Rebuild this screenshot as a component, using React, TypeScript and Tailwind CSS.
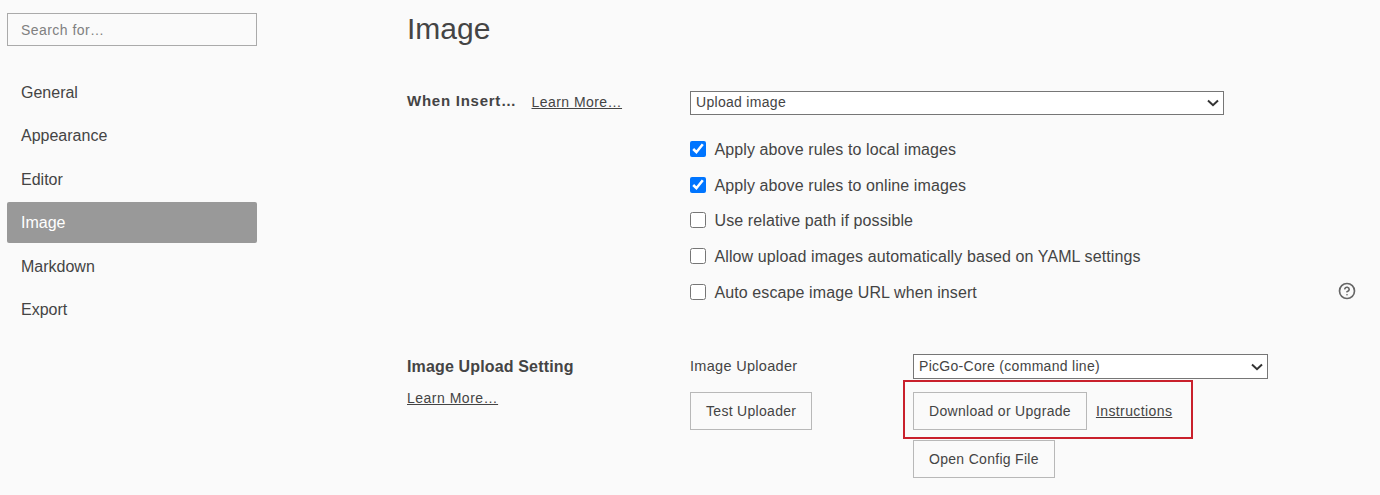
import { CircleHelp } from 'lucide-react'

const navItems = ['General', 'Appearance', 'Editor', 'Image', 'Markdown', 'Export']

const checks = [
  { label: 'Apply above rules to local images', checked: true },
  { label: 'Apply above rules to online images', checked: true },
  { label: 'Use relative path if possible', checked: false },
  { label: 'Allow upload images automatically based on YAML settings', checked: false },
  { label: 'Auto escape image URL when insert', checked: false },
]

const Button = ({ children }: { children: string }) => (
  <button className="h-[38px] px-[15px] border border-[#b8b8b8] text-[14px] tracking-[0.3px] text-[#444]">
    {children}
  </button>
)

const Select = ({ label, className }: { label: string; className: string }) => (
  <div className={`relative ${className}`}>
    <select className="block w-full h-full pl-[5px] pb-[1px] appearance-none border border-[#767676] bg-white text-[14px] tracking-[0.3px] text-[#444]">
      <option>{label}</option>
    </select>
    <svg
      viewBox="0 0 12 8"
      className="absolute right-[5px] top-1/2 -translate-y-1/2 w-[12px] h-[8px] pointer-events-none"
      fill="none"
      stroke="#333"
      strokeWidth="2"
    >
      <path d="M1 1.5 L6 6.2 L11 1.5" />
    </svg>
  </div>
)

export default function App() {
  return (
    <div className="h-[495px] overflow-hidden flex bg-[#fafafa] text-[#444] font-['Liberation_Sans',Arial,sans-serif]">
      <aside className="w-[400px] shrink-0 pl-[7px] pt-[13px]">
        <input
          placeholder="Search for…"
          className="w-[250px] h-[33px] px-[13px] border border-[#aaa] text-[14px] tracking-[0.45px] placeholder:text-[#808080] outline-none"
        />
        <ul className="w-[250px] mt-[26px]">
          {navItems.map((item) => (
            <li
              key={item}
              className={`h-[41px] px-[14px] flex items-center text-[16px] rounded-[2px] ${
                item === 'Image' ? '-mt-[0.1px] mb-[2.6px] bg-[#999] text-white' : 'mb-[2.5px] text-[#444]'
              }`}
            >
              {item}
            </li>
          ))}
        </ul>
      </aside>

      <main className="flex-1 pl-[7px]">
        <h1 className="mt-[10px] text-[30px] leading-[38px] text-[#444]">Image</h1>

        <section className="mt-[43px] flex">
          <div className="w-[283px] shrink-0 h-[22px] flex items-center">
            <span className="text-[15px] tracking-[0.75px] font-bold w-[124.5px] mb-[2px]">When Insert…</span>
            <a className="text-[14px] tracking-[0.45px] underline">Learn More…</a>
          </div>
          <div className="w-[666px]">
            <Select label="Upload image" className="w-[534px] h-[24px]" />
            <div className="mt-[23px] flex flex-col gap-[11.7px]">
              {checks.map((c) => (
                <label key={c.label} className="h-[24px] flex items-center text-[16px] tracking-[0.1px]">
                  <input type="checkbox" defaultChecked={c.checked} className="w-4 h-4 mr-[8.5px] mb-[2px]" />
                  <span>{c.label}</span>
                  {c.label.startsWith('Auto') && (
                    <CircleHelp className="ml-auto mb-[4px] w-[18px] h-[18px] text-[#666]" strokeWidth={2.2} />
                  )}
                </label>
              ))}
            </div>
          </div>
        </section>

        <section className="mt-[49.3px] flex">
          <div className="w-[283px] shrink-0">
            <h2 className="h-[25px] flex items-center text-[16px] tracking-[0.15px] font-bold">Image Upload Setting</h2>
            <a className="block mt-[9px] text-[14px] tracking-[0.5px] underline">Learn More…</a>
          </div>
          <div className="grid grid-cols-[223px_1fr]">
            <span className="h-[25px] flex items-center text-[14.5px] tracking-[0.3px]">Image Uploader</span>
            <Select label="PicGo-Core (command line)" className="w-[355px] h-[25px]" />
            <div className="mt-[13px]">
              <Button>Test Uploader</Button>
            </div>
            <div className="mt-[13px] flex flex-col items-start gap-[10px]">
              <div className="relative flex items-center">
                <Button>Download or Upgrade</Button>
                <a className="ml-[9px] text-[14px] tracking-[0.4px] underline">Instructions</a>
                <div className="absolute left-[-10px] top-[-12px] w-[290px] h-[59px] border-2 border-[#c9202c]" />
              </div>
              <Button>Open Config File</Button>
            </div>
          </div>
        </section>
      </main>
    </div>
  )
}
